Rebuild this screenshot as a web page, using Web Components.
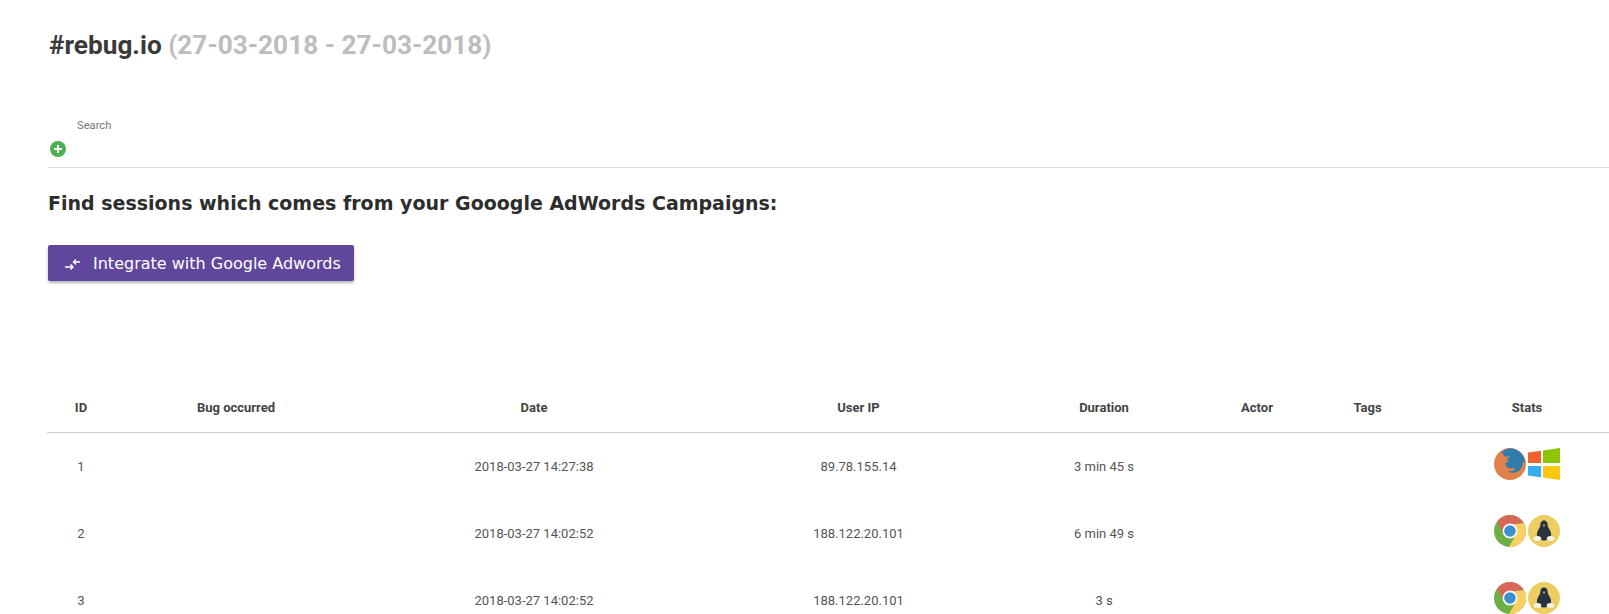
<!DOCTYPE html>
<html>
<head>
<meta charset="utf-8">
<title>rebug.io sessions</title>
<style>
	html, body {
		margin: 0;
		height: 614px;
		overflow: hidden;
		background: #fff;
		font-family: Roboto, sans-serif;
	}
</style>
</head>
<body>
<sessions-page>
	<page-title slot="title" name="#rebug.io" range="(27-03-2018 - 27-03-2018)"></page-title>
	<search-field slot="search" label="Search"></search-field>
	<adwords-box slot="adwords" heading="Find sessions which comes from your Gooogle AdWords Campaigns:" action="Integrate with Google Adwords"></adwords-box>
	<session-table slot="table">
		<session-row id-num="1" date="2018-03-27 14:27:38" ip="89.78.155.14" duration="3 min 45 s" browser="firefox" os="windows"></session-row>
		<session-row id-num="2" date="2018-03-27 14:02:52" ip="188.122.20.101" duration="6 min 49 s" browser="chrome" os="linux"></session-row>
		<session-row id-num="3" date="2018-03-27 14:02:52" ip="188.122.20.101" duration="3 s" browser="chrome" os="linux"></session-row>
	</session-table>
</sessions-page>

<script>
// column widths shared by the header and every row
const COLUMNS = '68px 242px 354px 295px 196px 110px 111px 208px';

const ICONS = {
	firefox: `<svg viewBox="0 0 32 32" width="32" height="32">
		<circle cx="16" cy="16" r="16" fill="#e0814b"/>
		<path d="M6 6C9 2 12.500 .5 16 .5c5 0 9.500 2.500 12.500 6.500 1.500 2.500 2.500 5.500 2.500 8.500-1-1-1.500-2.500-2-3.500 .5 4-1 9-5 11.500-3.500 2-8 1.500-10.500-.5 3 .5 6 0 7.500-1.500 .7-.7.5-1.500-.5-1.500-2.500.8-5.500.5-7.500-1-1.500-1.200-2-2.800-1.800-3.700 1.200-1 2.500-1.500 3.800-1.800-.5-1-1.600-1.200-2-2 .3-1.300 1.800-2.500 3.200-3.400-1.800-.2-3.400.2-4.500 1C10.500 8 8.500 7.500 6 6z" fill="#2e7cab"/>
		<path d="M6.500 3.500C6 5.500 6.200 7.500 6.800 9c1-.6 2.200-1 3.300-1-.7-1.800-2-3.400-3.600-4.500z" fill="#e0814b"/>
	</svg>`,
	windows: `<svg viewBox="0 0 32 32" width="32" height="32">
		<path d="M0 4.500 13 2.800V15H0z" fill="#f1622f"/>
		<path d="M15 2.500 32 0V15H15z" fill="#8fc400"/>
		<path d="M0 18H13V29.200L0 27.500z" fill="#33aff0"/>
		<path d="M15 18H32V32L15 29.500z" fill="#fcc70f"/>
	</svg>`,
	chrome: `<svg viewBox="0 0 32 32" width="32" height="32">
		<circle cx="16" cy="16" r="16" fill="#6fae45"/>
		<path d="M3.200 6.400A16 16 0 0 1 29.900 8.200L16 9.500 9.800 18z" fill="#d8675a"/>
		<path d="M29.900 8.200A16 16 0 0 1 15 32L22 19.500 16 9.500z" fill="#f8d063"/>
		<circle cx="16" cy="16" r="7.400" fill="#fff"/>
		<circle cx="16" cy="16" r="5.800" fill="#3e8fd0"/>
	</svg>`,
	linux: `<svg viewBox="0 0 32 32" width="32" height="32">
		<circle cx="16" cy="16" r="16" fill="#edce62"/>
		<path d="M16 5.500c2.600 0 3.700 2 3.700 4.500 0 2.200 1.400 3.500 2.400 5.500 1.100 2.200 1.400 5 .4 7-1.300 2.400-4 2.900-6.500 2.900s-5.200-.5-6.500-2.900c-1-2 -.7-4.800.4-7 1-2 2.400-3.300 2.400-5.500 0-2.500 1.100-4.500 3.700-4.500z" fill="#26343f"/>
		<ellipse cx="9.500" cy="23.500" rx="3.800" ry="2.500" fill="#f6f3e6"/>
		<ellipse cx="22.500" cy="23.500" rx="3.800" ry="2.500" fill="#f6f3e6"/>
		<path d="M14.500 9.800h3l-1.500 2z" fill="#edb13c"/>
	</svg>`
};

class SessionsPage extends HTMLElement {
	constructor() {
		super();
		const shadowRoot = this.attachShadow({ mode: 'open' });
		shadowRoot.innerHTML = `
		<style>
			:host {
				display: flex;
				flex-direction: column;
				width: 1609px;
				height: 614px;
				overflow: hidden;
				box-sizing: border-box;
				padding: 25px 0 0 48px;
			}
			::slotted(*) {
				flex: none;
			}
		</style>
		<slot name="title"></slot>
		<slot name="search"></slot>
		<slot name="adwords"></slot>
		<slot name="table"></slot>`;
	}
}

class PageTitle extends HTMLElement {
	constructor() {
		super();
		this.attachShadow({ mode: 'open' });
	}
	connectedCallback() {
		this.shadowRoot.innerHTML = `
		<style>
			:host {
				display: block;
				height: 40px;
				padding-left: 1px;
			}
			h1 {
				margin: 0;
				font: 700 26.200px/40px Roboto, sans-serif;
				color: #3a3a3a;
				white-space: nowrap;
			}
			span {
				color: #bdbdbd;
			}
		</style>
		<h1>${this.getAttribute('name')} <span>${this.getAttribute('range')}</span></h1>`;
	}
}

class SearchField extends HTMLElement {
	constructor() {
		super();
		this.attachShadow({ mode: 'open' });
	}
	connectedCallback() {
		this.shadowRoot.innerHTML = `
		<style>
			:host {
				display: block;
				margin-top: 54px;
				height: 49px;
				box-sizing: border-box;
				border-bottom: 1px solid #ddd;
			}
			.label {
				font: 11.200px/14px Roboto, sans-serif;
				color: #777;
				padding-left: 29px;
			}
			.add {
				display: block;
				margin: 8px 0 0 2px;
			}
		</style>
		<div class="label">${this.getAttribute('label')}</div>
		<svg class="add" width="16" height="16" viewBox="0 0 16 16">
			<circle cx="8" cy="8" r="8" fill="#4caf50"/>
			<path d="M8 4v8M4 8h8" stroke="#fff" stroke-width="2"/>
		</svg>`;
	}
}

class AdwordsBox extends HTMLElement {
	constructor() {
		super();
		this.attachShadow({ mode: 'open' });
	}
	connectedCallback() {
		this.shadowRoot.innerHTML = `
		<style>
			:host {
				display: block;
				height: 214px;
			}
			h2 {
				margin: 23px 0 0 0;
				font: bold 19px/24px "DejaVu Sans", sans-serif;
				color: #2d2d2d;
				white-space: nowrap;
			}
			button {
				display: flex;
				align-items: center;
				margin-top: 30px;
				height: 36px;
				padding: 0 13px 0 16px;
				border: 0;
				border-radius: 2px;
				background: #61479b;
				color: #fff;
				font: 16px "DejaVu Sans", sans-serif;
				box-shadow: 0 2px 3px rgba(0, 0, 0, .3);
				white-space: nowrap;
			}
			svg {
				margin-right: 11px;
			}
		</style>
		<h2>${this.getAttribute('heading')}</h2>
		<button>
			<svg width="18" height="18" viewBox="0 0 18 18" fill="none" stroke="#fff" stroke-width="1.500">
				<path d="M1 13H9M6.500 10.500 9 13l-2.500 2.500"/>
				<path d="M16 8H9.500M12 5.500 9.500 8l2.500 2.500"/>
			</svg>
			${this.getAttribute('action')}
		</button>`;
	}
}

class SessionTable extends HTMLElement {
	constructor() {
		super();
		const shadowRoot = this.attachShadow({ mode: 'open' });
		const heads = ['ID', 'Bug occurred', 'Date', 'User IP', 'Duration', 'Actor', 'Tags', 'Stats'];
		shadowRoot.innerHTML = `
		<style>
			:host {
				display: block;
				margin-left: -1px;
				width: 1613px;
			}
			.head {
				display: grid;
				grid-template-columns: ${COLUMNS};
				height: 51px;
				align-items: center;
				box-sizing: border-box;
				border-bottom: 1px solid #ccc;
				font: 700 13px Roboto, sans-serif;
				color: #444;
				text-align: center;
			}
		</style>
		<div class="head">${heads.map(h => `<div>${h}</div>`).join('')}</div>
		<slot></slot>`;
	}
}

class SessionRow extends HTMLElement {
	constructor() {
		super();
		this.attachShadow({ mode: 'open' });
	}
	connectedCallback() {
		const get = name => this.getAttribute(name);
		this.shadowRoot.innerHTML = `
		<style>
			:host {
				display: grid;
				grid-template-columns: ${COLUMNS};
				height: 67px;
				align-items: center;
				font: 13px Roboto, sans-serif;
				color: #555;
				text-align: center;
			}
			.stats {
				display: flex;
				justify-content: center;
				gap: 2px;
				margin-bottom: 6px;
			}
			svg {
				display: block;
			}
		</style>
		<div>${get('id-num')}</div>
		<div></div>
		<div>${get('date')}</div>
		<div>${get('ip')}</div>
		<div>${get('duration')}</div>
		<div></div>
		<div></div>
		<div class="stats">${ICONS[get('browser')]}${ICONS[get('os')]}</div>`;
	}
}

customElements.define('sessions-page', SessionsPage);
customElements.define('page-title', PageTitle);
customElements.define('search-field', SearchField);
customElements.define('adwords-box', AdwordsBox);
customElements.define('session-table', SessionTable);
customElements.define('session-row', SessionRow);
</script>
</body>
</html>
